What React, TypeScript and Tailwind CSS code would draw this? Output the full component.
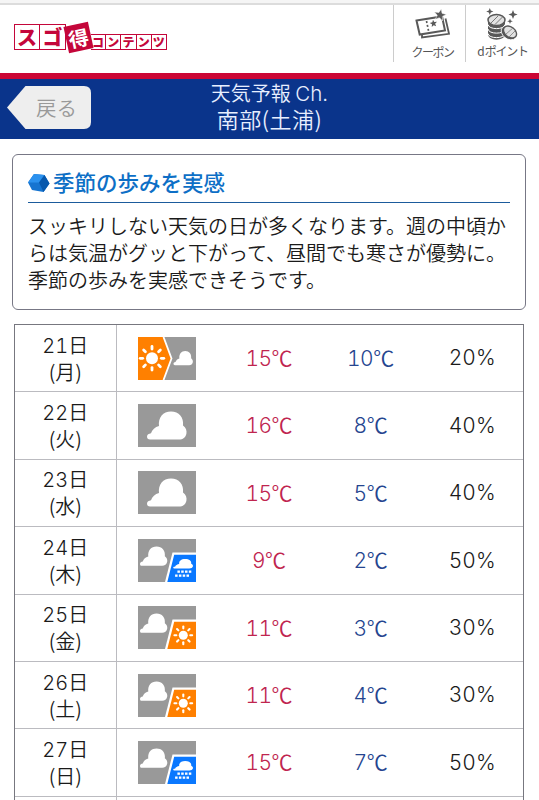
import React from 'react';

type Weather = 'sunThenCloud' | 'cloud' | 'cloudRain' | 'cloudSun';

interface Forecast {
  day: number;
  weekday: string;
  weather: Weather;
  high: number;
  low: number;
  rain: number;
}

const forecasts: Forecast[] = [
  { day: 21, weekday: '月', weather: 'sunThenCloud', high: 15, low: 10, rain: 20 },
  { day: 22, weekday: '火', weather: 'cloud', high: 16, low: 8, rain: 40 },
  { day: 23, weekday: '水', weather: 'cloud', high: 15, low: 5, rain: 40 },
  { day: 24, weekday: '木', weather: 'cloudRain', high: 9, low: 2, rain: 50 },
  { day: 25, weekday: '金', weather: 'cloudSun', high: 11, low: 3, rain: 30 },
  { day: 26, weekday: '土', weather: 'cloudSun', high: 11, low: 4, rain: 30 },
  { day: 27, weekday: '日', weather: 'cloudRain', high: 15, low: 7, rain: 50 },
];

// Cloud outline in a 40x28 box
const Cloud: React.FC<{ transform: string }> = ({ transform }) => (
  <path
    transform={transform}
    fill="#fff"
    d="M3 28C1 28 0 26.800 0 25.200C0 23 1.800 22.300 4 21.800C5.200 18.300 8 15.500 12 14.600C11 6 16 0 24 0C32 0 37 6 36 14C39 16.200 40 19 39.400 22.200C38.600 26 36 28 32 28Z"
  />
);

const Sun: React.FC<{ transform: string }> = ({ transform }) => (
  <g transform={transform}>
    <circle r="6" fill="#fff" />
    {[0, 45, 90, 135, 180, 225, 270, 315].map((a) => (
      <line key={a} y1="-11.800" y2="-9.300" stroke="#fff" strokeWidth="2.800" strokeLinecap="round" transform={`rotate(${a})`} />
    ))}
  </g>
);

const WeatherIcon: React.FC<{ weather: Weather }> = ({ weather }) => (
  <svg width="58" height="43" viewBox="0 0 58 43">
    <rect width="58" height="43" fill="#999" />
    {weather === 'sunThenCloud' && (
      <>
        <path d="M0 0H25.500L33.500 21.500L25.500 43H0Z" fill="#ff8000" />
        <path d="M25.500 0L33.500 21.500L25.500 43" fill="none" stroke="#fff" strokeWidth="1.800" />
        <Sun transform="translate(14 21.300)" />
        <Cloud transform="translate(35.500 14) scale(.49 .51)" />
      </>
    )}
    {weather === 'cloud' && <Cloud transform="translate(9 7.500)" />}
    {(weather === 'cloudRain' || weather === 'cloudSun') && (
      <>
        <Cloud transform="translate(2 7.500) scale(.69)" />
        <path d="M27 43L34.500 13.500H58V43Z" fill="#fff" />
        <path d="M29.300 43L36.200 15.700H58V43Z" fill={weather === 'cloudRain' ? '#0a78ff' : '#ff8000'} />
      </>
    )}
    {weather === 'cloudSun' && <Sun transform="translate(45.300 29.300) scale(.75)" />}
    {weather === 'cloudRain' && (
      <>
        <Cloud transform="translate(35.200 20) scale(.5 .34)" />
        {[39.400, 43.200, 47, 50.800].map((x) => (
          <React.Fragment key={x}>
            <rect x={x} y="31.500" width="2.500" height="2.300" fill="#fff" />
            <rect x={x - 2.300} y="35.500" width="2.500" height="2.300" fill="#fff" />
          </React.Fragment>
        ))}
      </>
    )}
  </svg>
);

const STAR = 'M0 -5L1.300 -1.700L4.900 -1.500L2.100 .7L3 4.200L0 2.200L-3 4.200L-2.100 .7L-4.900 -1.500L-1.300 -1.700Z';
const SPARKLE = 'M0 -4L1.100 -1.100L4 0L1.100 1.100L0 4L-1.100 1.100L-4 0L-1.100 -1.100Z';

const CouponIcon: React.FC = () => (
  <svg width="36" height="32" viewBox="0 0 36 32" className="shrink-0">
    <path d="M7 26V29.500L34 25.800L30.500 10.500" fill="none" stroke="#595959" strokeWidth="1.800" />
    <path d="M1.500 12.500L27 8.500L30 22.500L4.700 26.500Z" fill="#fff" stroke="#595959" strokeWidth="2" />
    <path d="M11.500 13L14 25" stroke="#595959" strokeWidth="1.700" strokeDasharray="2 2" />
    <path d={STAR} fill="#595959" transform="translate(18.500 15.500) rotate(-8) scale(.75)" />
    <path d={STAR} fill="#595959" stroke="#fff" strokeWidth=".4" transform="translate(25 7) rotate(12) scale(1.250)" />
  </svg>
);

const PointIcon: React.FC = () => (
  <svg width="34" height="36" viewBox="0 0 34 36" className="shrink-0">
    <path d="M2 13V27C2 34.500 19 34.500 19 27V13Z" fill="#595959" />
    <path d="M2 17.500C2.500 23 18.500 23 19 17.500M2 22C2.500 27.500 18.500 27.500 19 22M2 26.500C2.500 32 18.500 32 19 26.500" fill="none" stroke="#fff" strokeWidth="1" />
    <ellipse cx="10.500" cy="13" rx="8.500" ry="5.600" fill="#e2e2e2" stroke="#595959" strokeWidth="1.500" />
    <path d="M5 16L12 9M9 17.500L16.500 10" stroke="#777" strokeWidth="1" />
    <g transform="translate(24 25) rotate(38)">
      <ellipse cx="-.5" cy="1.500" rx="8.300" ry="6" fill="#595959" stroke="#fff" strokeWidth=".8" />
      <ellipse rx="7.300" ry="5" fill="#e2e2e2" stroke="#595959" strokeWidth="1.400" />
    </g>
    <path d="M20 27L27 21M23 30L29 24" stroke="#888" strokeWidth=".9" />
    <path d={SPARKLE} fill="#595959" transform="translate(3.800 4.500) scale(.9)" />
    <path d={SPARKLE} fill="#595959" transform="translate(27 7.500) scale(1.150)" />
    <path d={SPARKLE} fill="#595959" transform="translate(24 14.200) scale(.7)" />
  </svg>
);

const Logo: React.FC = () => (
  <div className="flex h-[26px] items-end font-black text-[#c4063a]">
    {['ス', 'ゴ'].map((c, i) => (
      <span
        key={c}
        className={`flex h-[26px] w-[26px] items-center justify-center border border-[#c4063a] text-[20px] leading-none ${i === 0 ? '' : 'border-l-0'}`}
      >
        {c}
      </span>
    ))}
    <span className="relative mb-[-1px] flex h-[27px] w-[25px] -rotate-[12deg] items-center justify-center bg-[#c4063a] text-[20px] font-bold leading-none text-white">
      得
    </span>
    <span className="flex">
      {['コ', 'ン', 'テ', 'ン', 'ツ'].map((c, i) => (
        <span
          key={i}
          className="flex h-4 w-[15.200px] items-center justify-center border border-l-0 border-[#c4063a] text-[12px] leading-none"
        >
          {c}
        </span>
      ))}
    </span>
  </div>
);

const App: React.FC = () => {
  return (
    <div className="h-[800px] w-[539px] overflow-hidden bg-white font-['Noto_Sans_CJK_JP',sans-serif] text-[#1a1a1a]">
      <div className="h-[5px] border-b-2 border-[#dcdcdc] bg-[#f5f5f5]" />

      <header className="flex h-[68px] justify-between">
        <div className="pl-[14px] pt-[19px]">
          <Logo />
        </div>
        <nav className="flex h-[57px] text-[12px] leading-[14px] text-[#555]">
          <a className="flex w-[72px] flex-col items-center border-l border-[#ccc] pl-[6px] pt-[3px]">
            <CouponIcon />
            <span className="mt-[5px] whitespace-nowrap tracking-[-1.500px]">クーポン</span>
          </a>
          <a className="flex w-[74px] flex-col items-center border-l border-[#ccc] pt-[2px]">
            <PointIcon />
            <span className="mt-px whitespace-nowrap tracking-[-1.300px]">
              <span className="tracking-normal">d</span>ポイント
            </span>
          </a>
        </nav>
      </header>

      <div className="grid h-[66px] grid-cols-[100px_1fr_100px] border-t-[6px] border-[#cb0635] bg-[#0a348b]">
        <button className="relative mt-[7px] ml-[7px] flex h-[43px] w-[84px] items-center">
          <svg className="absolute inset-0" width="84" height="43" viewBox="0 0 84 43">
            <path d="M18.500 0H77Q84 0 84 7V36Q84 43 77 43H18.500L0 21.500Z" fill="#eee" />
          </svg>
          <span className="relative pl-[29px] text-[20.500px] font-[350] leading-none text-[#999]">戻る</span>
        </button>
        <h1 className="pt-[2px] text-center font-[350] text-[#e8efff]">
          <span className="block text-[20px] leading-[24px]">
            天気予報 <span className="font-['Inter',sans-serif] text-[20.500px] font-light">Ch.</span>
          </span>
          <span className="block text-[22px] leading-[24px] tracking-[0.500px]">南部(土浦)</span>
        </h1>
      </div>

      <section className="mx-[12px] mt-[15px] h-[156px] w-[514px] rounded-md border-[1.500px] border-[#777785] pl-[15px] pr-[15px] pt-[14px]">
        <h2 className="flex h-[34px] items-start border-b border-[#1b5b9c] pt-px text-[21.500px] font-medium leading-[24px] text-[#0d6fc6]">
          <svg width="22" height="20" viewBox="0 0 22 20" className="mt-[3px] mr-[3px]">
            <path d="M6 1L16.500 2L21.500 10.500L15.500 19L4 17L0 9.500Z" fill="#1674d0" />
            <path d="M6 1L16.500 2L11 9.500L0 9.500Z" fill="#2b91ee" />
            <path d="M11 9.500L16.500 2L21.500 10.500L15.500 19Z" fill="#0758ad" />
          </svg>
          季節の歩みを実感
        </h2>
        <p className="mt-[9px] whitespace-nowrap text-[20px] font-[350] leading-[27px]">
          スッキリしない天気の日が多くなります。週の中頃か
          <br />
          らは気温がグッと下がって、昼間でも寒さが優勢に。
          <br />
          季節の歩みを実感できそうです。
        </p>
      </section>

      <div className="ml-[14px] mt-[14px] w-[510px] border border-[#77777f]">
        {forecasts.map((f) => (
          <div key={f.day} className="grid h-[67.400px] grid-cols-5 items-center border-b border-[#bbbbc0] text-center tabular-nums">
            <div className="flex h-full flex-col justify-center border-r border-[#bbbbc0] text-[20px] font-[350] leading-[26px]">
              <span>
                <span className="font-['Inter',sans-serif]">{f.day}</span>日
              </span>
              <span>({f.weekday})</span>
            </div>
            <div className="flex justify-center">
              <WeatherIcon weather={f.weather} />
            </div>
            <div className="text-[21px] font-[350] text-[#c0254f]">
              <span className="font-['Inter',sans-serif] tracking-[-0.500px]">{f.high}</span>℃
            </div>
            <div className="text-[21px] font-[350] text-[#25458f]">
              <span className="font-['Inter',sans-serif] tracking-[-0.500px]">{f.low}</span>℃
            </div>
            <div className="font-['Inter',sans-serif] text-[21px] font-[350]">{f.rain}%</div>
          </div>
        ))}
        <div className="grid h-[67.400px] grid-cols-5">
          <div className="border-r border-[#bbbbc0]" />
        </div>
      </div>
    </div>
  );
};

export default App;
